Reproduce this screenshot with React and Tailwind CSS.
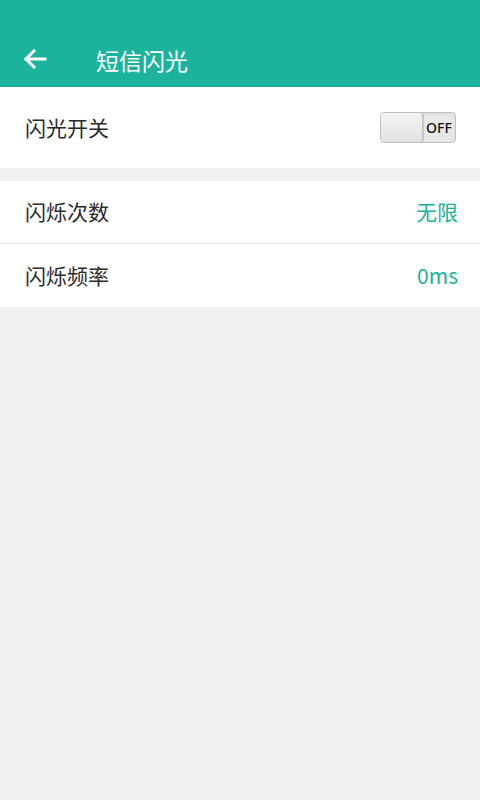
const FONT = { fontFamily: '"Noto Sans CJK SC", "Noto Sans", sans-serif' }

function Toggle() {
  return (
    <div className="flex h-[31px] w-[76px] items-stretch rounded-[4px] border border-[#c0c0c0] bg-[#e8e8e8] shadow-inner">
      <div className="w-[42px] rounded-[3px] border-r border-[#c2c2c2] bg-gradient-to-b from-[#f4f4f4] to-[#e2e2e2] shadow-[1px_0_1px_rgba(0,0,0,0.15)]" />
      <div className="flex flex-1 items-center justify-center text-[14px] font-medium text-[#111]" style={{ fontFamily: '"Noto Sans", sans-serif' }}>
        OFF
      </div>
    </div>
  )
}

function Row({ label, value, border }) {
  return (
    <div className={`flex h-[63px] items-center justify-between bg-white pl-[25px] pr-[22px] ${border ? 'border-b border-[#e0e0e0]' : ''}`}>
      <span className="text-[21px] text-[#2a2a2a]">{label}</span>
      <span className="text-[21px] text-[#1bb39b]">{value}</span>
    </div>
  )
}

export default function App() {
  return (
    <div className="flex h-[800px] w-[480px] flex-col bg-[#f1f1f1]" style={FONT}>
      {/* Header */}
      <div className="flex h-[87px] items-end border-b border-[#17a58e] bg-[#1bb39b] pb-[6px]">
        <div className="flex h-[40px] items-center">
          <svg width="24" height="20" viewBox="0 0 24 20" className="ml-[23px] -mt-[2px]">
            <path d="M22 10H3M11 2L3 10l8 8" fill="none" stroke="white" strokeWidth="3" strokeLinecap="square" />
          </svg>
          <span className="ml-[49px] text-[23px] text-white">短信闪光</span>
        </div>
      </div>

      {/* Flash switch */}
      <div className="flex h-[81px] items-center justify-between bg-white pl-[25px] pr-[24px]">
        <span className="text-[21px] text-[#2a2a2a]">闪光开关</span>
        <Toggle />
      </div>

      <div className="h-[13px]" />

      <Row label="闪烁次数" value="无限" border />
      <Row label="闪烁频率" value="0ms" />
    </div>
  )
}
